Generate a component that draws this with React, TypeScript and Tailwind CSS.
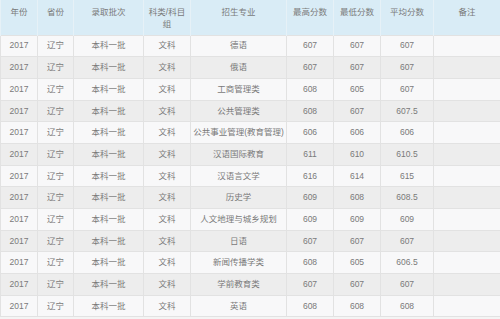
import React from "react";

const rows: [string, string, string, string, string][] = [
  ["德语", "607", "607", "607", ""],
  ["俄语", "607", "607", "607", ""],
  ["工商管理类", "608", "605", "607", ""],
  ["公共管理类", "608", "607", "607.5", ""],
  ["公共事业管理(教育管理)", "606", "606", "606", ""],
  ["汉语国际教育", "611", "610", "610.5", ""],
  ["汉语言文学", "616", "614", "615", ""],
  ["历史学", "609", "608", "608.5", ""],
  ["人文地理与城乡规划", "609", "609", "609", ""],
  ["日语", "607", "607", "607", ""],
  ["新闻传播学类", "608", "605", "606.5", ""],
  ["学前教育类", "607", "607", "607", ""],
  ["英语", "608", "608", "608", ""],
];

const widths = ["w-[37px]", "w-[36px]", "w-[70px]", "w-[47px]", "w-[96px]", "w-[47px]", "w-[47px]", "w-[53px]", "w-[67px]"];
const heads = ["年份", "省份", "录取批次", "科类/科目组", "招生专业", "最高分数", "最低分数", "平均分数", "备注"];

export default function App() {
  return (
    <div className="w-[500px] h-[319px] overflow-hidden bg-[#f4f4f4] font-['Liberation_Sans','Noto_Sans_CJK_SC',sans-serif] text-[8.5px] text-[#7a7a7a]">
      <table className="w-[500px] table-fixed border-collapse border-r border-[#d8d8d8]">
        <colgroup>
          {widths.map((w, i) => (
            <col key={i} className={w} />
          ))}
        </colgroup>
        <thead>
          <tr className="h-[35px] bg-[#d9ecf6]">
            {heads.map((h, i) => (
              <th key={i} className="align-top pt-[6px] px-[2px] font-normal leading-[12px] border-x border-[#e6f1f7]">
                {h}
              </th>
            ))}
          </tr>
        </thead>
        <tbody>
          {rows.map((r, i) => (
            <tr key={i} className={`h-[21.7px] ${i % 2 === 0 ? "bg-[#f8f8f9]" : "bg-[#ededed]"}`}>
              <td className="text-center border border-[#e2e2e2]">2017</td>
              <td className="text-center border border-[#e2e2e2]">辽宁</td>
              <td className="text-center border border-[#e2e2e2]">本科一批</td>
              <td className="text-center border border-[#e2e2e2]">文科</td>
              <td className="text-center border border-[#e2e2e2] whitespace-nowrap">{r[0]}</td>
              <td className="text-center border border-[#e2e2e2]">{r[1]}</td>
              <td className="text-center border border-[#e2e2e2]">{r[2]}</td>
              <td className="text-center border border-[#e2e2e2]">{r[3]}</td>
              <td className="text-center border border-[#e2e2e2]">{r[4]}</td>
            </tr>
          ))}
        </tbody>
      </table>
    </div>
  );
}
